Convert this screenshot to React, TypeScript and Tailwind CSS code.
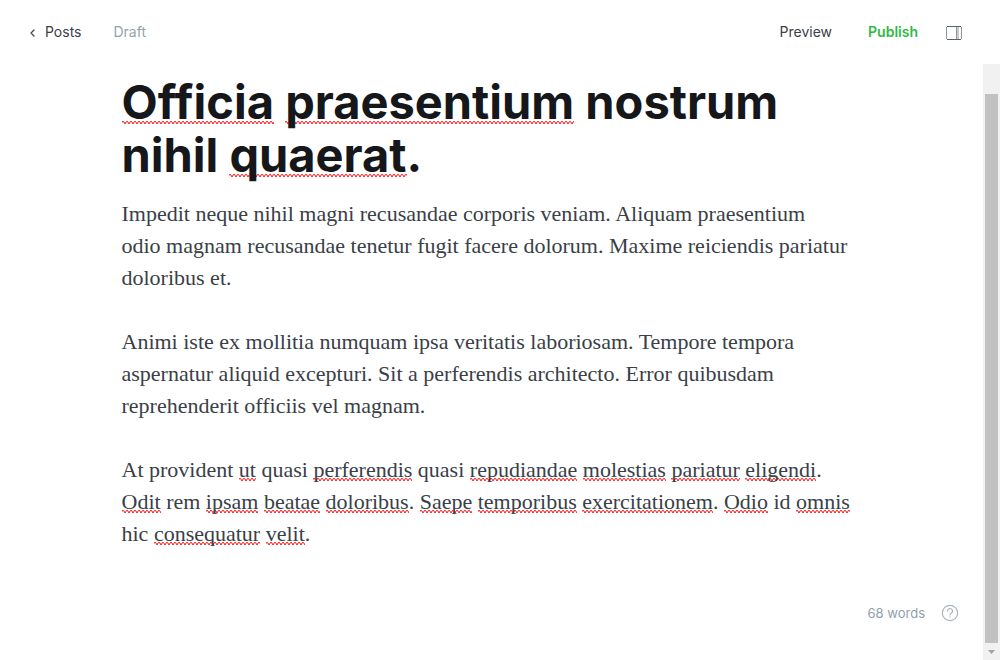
import React from "react";

function Misspelled({ children }: { children: React.ReactNode }) {
  return (
    <span className="bg-[linear-gradient(90deg,#ff0000c0_50%,transparent_50%),linear-gradient(90deg,#ff000060_50%,#ff0000a0_50%),linear-gradient(90deg,transparent_50%,#ff0000c0_50%)] bg-[length:4px_1px] bg-repeat-x [background-position:0_calc(100%_-_var(--squiggle)_-_2px),0_calc(100%_-_var(--squiggle)_-_1px),0_calc(100%_-_var(--squiggle))]">
      {children}
    </span>
  );
}

function marked(text: string) {
  return text
    .split(/(\[[^\]]+\])/)
    .map((part, i) =>
      part.startsWith("[") ? <Misspelled key={i}>{part.slice(1, -1)}</Misspelled> : part
    );
}

function Lines({ lines }: { lines: string[] }) {
  return (
    <>
      {lines.map((line) => (
        <span key={line} className="block whitespace-nowrap">
          {marked(line)}
        </span>
      ))}
    </>
  );
}

const title = ["[Officia] [praesentium] nostrum", "nihil [quaerat]."];

const paragraphs = [
  [
    "Impedit neque nihil magni recusandae corporis veniam. Aliquam praesentium",
    "odio magnam recusandae tenetur fugit facere dolorum. Maxime reiciendis pariatur",
    "doloribus et.",
  ],
  [
    "Animi iste ex mollitia numquam ipsa veritatis laboriosam. Tempore tempora",
    "aspernatur aliquid excepturi. Sit a perferendis architecto. Error quibusdam",
    "reprehenderit officiis vel magnam.",
  ],
  [
    "At provident [ut] quasi [perferendis] quasi [repudiandae] [molestias] [pariatur] [eligendi].",
    "[Odit] rem [ipsam] [beatae] [doloribus]. [Saepe] [temporibus] [exercitationem]. [Odio] id [omnis]",
    "hic [consequatur] [velit].",
  ],
];

export default function App() {
  return (
    <div className="flex h-screen flex-col bg-white font-['Inter',sans-serif] text-sm text-[#394047]">
      <header className="flex h-16 shrink-0 items-center justify-between pr-9 pl-7">
        <nav className="flex items-center gap-8">
          <a href="#posts" className="flex items-center gap-2">
            <svg viewBox="0 0 9 10" className="h-[10px] w-[9px]" fill="none" stroke="currentColor" strokeWidth="1.2" strokeLinecap="round" strokeLinejoin="round" aria-hidden="true">
              <path d="M6 3 3 6l3 3" />
            </svg>
            Posts
          </a>
          <span className="text-[#95a1ad]">Draft</span>
        </nav>
        <div className="flex items-center">
          <button type="button">Preview</button>
          <button type="button" className="ml-9 font-semibold text-[#30b943]">
            Publish
          </button>
          <button type="button" aria-label="Settings" className="ml-7 pt-px">
            <svg viewBox="0 0 18 16" className="h-4 w-[18px]" fill="none" aria-hidden="true">
              <path d="M1 1.500h14M1 14.500h14" stroke="#5a6068" />
              <path d="M.5 2v12M15.500 2v12M10.500 2v12M12 2v12" stroke="#8e959c" />
            </svg>
          </button>
        </div>
      </header>

      <div className="flex min-h-0 flex-1">
        <main className="flex min-w-0 flex-1 flex-col">
          <article className="mx-auto w-full max-w-[740px] flex-1 pt-[11px]">
            <h1 className="text-[47px] leading-[53px] font-bold text-[#15171a] [--squiggle:6px]">
              <Lines lines={title} />
            </h1>
            <div className="mt-[17px] flex flex-col gap-8 font-['Liberation_Serif',serif] text-[22px] leading-8 [--squiggle:1px]">
              {paragraphs.map((lines) => (
                <p key={lines[0]}>
                  <Lines lines={lines} />
                </p>
              ))}
            </div>
          </article>
          <footer className="flex items-center justify-end gap-4 pr-6 pb-[37px] text-[13px] leading-5 text-[#8fa0b0]">
            <span>68 words</span>
            <button type="button" aria-label="Help">
              <svg viewBox="0 0 18 18" className="size-[18px]" fill="none" stroke="#aab4c0" strokeWidth="1.2" strokeLinecap="round" aria-hidden="true">
                <circle cx="9" cy="9" r="7.700" />
                <path d="M6.500 7a2.500 2.500 0 1 1 3.700 2.200C9.300 9.700 9 10 9 11" />
                <circle cx="9" cy="13" r=".2" />
              </svg>
            </button>
          </footer>
        </main>
        <div aria-hidden="true" className="flex w-[17px] shrink-0 flex-col bg-[#f1f1f1] px-0.5 pt-[30px]">
          <div className="flex-1 bg-[#c1c1c1]" />
          <div className="flex h-[17px] items-center justify-center">
            <svg viewBox="0 0 7 4" className="h-1 w-[7px]" fill="#a3a3a3">
              <path d="M0 0h7L3.500 4z" />
            </svg>
          </div>
        </div>
      </div>
    </div>
  );
}
